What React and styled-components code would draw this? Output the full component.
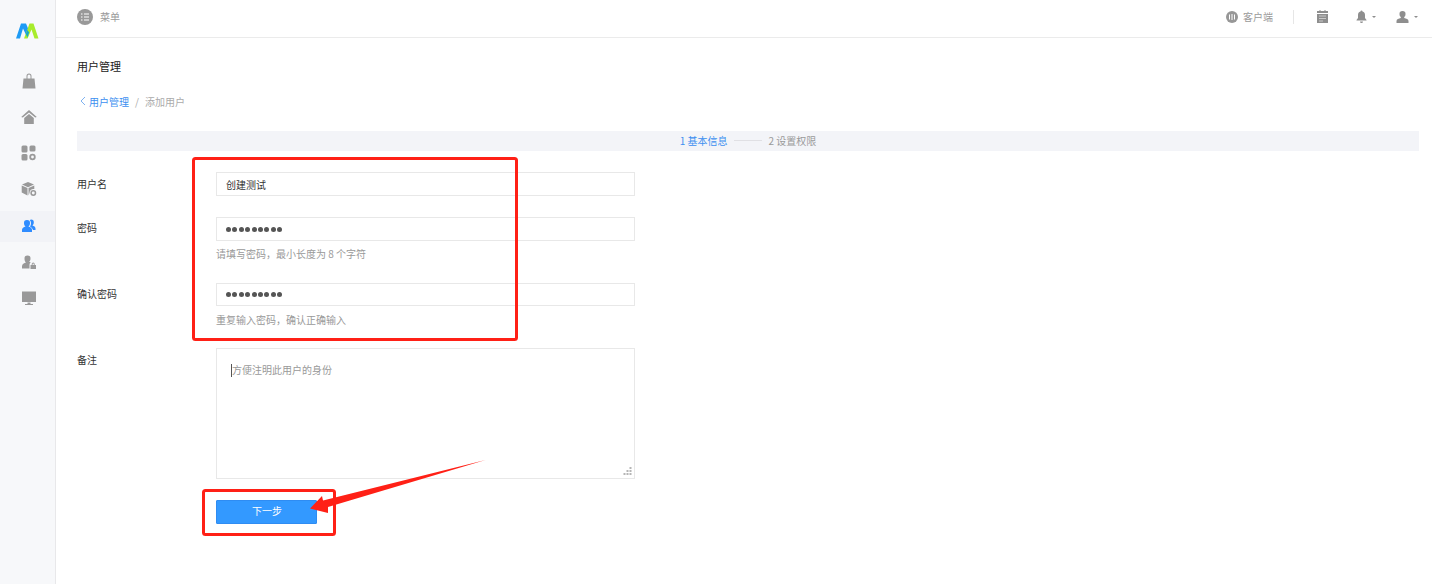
import React from "react";
import styled, { createGlobalStyle } from "styled-components";

const Global = createGlobalStyle`
  html, body { margin: 0; padding: 0; background: #fff; height: 100%; overflow: hidden; }
  * { box-sizing: border-box; }
  body { font-family: "Noto Sans CJK SC", "Liberation Sans", sans-serif; font-size: 10px; color: #333; }
`;

const Shell = styled.div`
  position: relative;
  display: flex;
  width: 1432px;
  height: 584px;
`;
const Sidebar = styled.aside`
  width: 56px;
  flex: none;
  background: #f7f8fa;
  border-right: 1px solid #e8e8ea;
  display: flex;
  flex-direction: column;
  align-items: stretch;
`;
const LogoBox = styled.div`
  height: 63px;
  padding: 22px 0 0 16px;
`;
const NavItem = styled.div`
  height: 36px;
  padding-left: 3px;
  display: flex;
  align-items: center;
  justify-content: center;
  color: #999;
`;
const ActiveNavItem = styled(NavItem)`
  height: 31px;
  margin: 4px 0 2px;
  padding-bottom: 2px;
  color: #2f8cff;
  background: #f2f3f7;
`;
const Main = styled.main`
  flex: 1;
  min-width: 0;
  display: flex;
  flex-direction: column;
`;
const Header = styled.header`
  height: 38px;
  flex: none;
  border-bottom: 1px solid #ebebeb;
  display: flex;
  align-items: center;
  justify-content: space-between;
  padding: 0 14px 4px 21px;
  color: #999;
`;
const HeaderGroup = styled.div`
  display: flex;
  align-items: center;
`;
const MenuLabel = styled.span`
  font-size: 10px;
  margin-left: 7px;
  color: #9a9a9a;
`;
const ClientLabel = styled.span`
  font-size: 10px;
  margin-left: 5px;
  color: #9a9a9a;
`;
const Divider = styled.span`
  width: 1px;
  height: 14px;
  background: #e6e6e6;
  margin: 0 23px 0 20px;
`;
const HeaderIcon = styled.span`
  display: inline-flex;
  align-items: center;
  margin-left: ${p => p.$ml || 0}px;
  color: #8e8e8e;
`;
const Caret = styled.span`
  width: 0;
  height: 0;
  margin-left: 5px;
  margin-top: 1px;
  border-left: 2px solid transparent;
  border-right: 2px solid transparent;
  border-top: 2px solid #8e8e8e;
`;
const Content = styled.div`
  padding: 20px 13px 0 21px;
`;
const Title = styled.h1`
  margin: 0;
  font-size: 11px;
  line-height: 16px;
  font-weight: 400;
  color: #222;
`;
const Crumbs = styled.nav`
  margin-top: 19px;
  height: 16px;
  display: flex;
  align-items: center;
  font-size: 10px;
  color: #aaa;
`;
const CrumbBack = styled.svg`
  margin-left: 2px;
`;
const CrumbLink = styled.span`
  color: #3c8ff0;
  margin-left: 2px;
`;
const CrumbSep = styled.span`
  margin: 0 6px;
  color: #aaa;
`;
const Steps = styled.div`
  margin-top: 22px;
  height: 20px;
  padding-bottom: 2px;
  background: #f3f4f8;
  display: flex;
  align-items: center;
  justify-content: center;
  font-size: 10px;
`;
const Step = styled.span`
  color: ${p => (p.$active ? "#3c8ff0" : "#9a9a9a")};
`;
const StepLine = styled.span`
  width: 28px;
  height: 1px;
  background: #e0e0e4;
  margin: 0 7px 0 6px;
`;
const Form = styled.form`
  margin-top: 21px;
  display: flex;
  flex-direction: column;
  gap: 21px;
`;
const Row = styled.div`
  display: flex;
  align-items: flex-start;
`;
const Label = styled.label`
  width: 139px;
  flex: none;
  font-size: 10px;
  line-height: ${p => p.$lh || 24}px;
  color: #333;
`;
const Field = styled.div`
  width: 419px;
  display: flex;
  flex-direction: column;
`;
const Input = styled.div`
  height: ${p => p.$h || 24}px;
  border: 1px solid #e8e8e8;
  padding-left: 9px;
  display: flex;
  align-items: center;
  font-size: 10px;
  color: #333;
`;
const Dots = styled.span`
  display: flex;
  gap: 1.4px;
`;
const Dot = styled.i`
  width: 5px;
  height: 5px;
  border-radius: 50%;
  background: #555;
`;
const Help = styled.div`
  margin-top: ${p => p.$mt}px;
  height: ${p => p.$h}px;
  line-height: 14px;
  font-size: 10px;
  color: #999;
`;
const Area = styled.div`
  position: relative;
  height: 131px;
  border: 1px solid #e8e8e8;
  padding: 13px 0 0 14px;
  font-size: 10px;
  line-height: 16px;
  color: #999;
  display: flex;
  align-items: flex-start;
`;
const Cursor = styled.span`
  width: 1px;
  height: 13px;
  margin-top: 2px;
  background: #555;
`;
const Grip = styled.svg`
  position: absolute;
  right: 2px;
  bottom: 2px;
`;
const NextButton = styled.button`
  width: 101px;
  height: 24px;
  margin-left: 139px;
  border: 1px solid #2f8cf2;
  border-radius: 1px;
  background: #3399ff;
  color: #fff;
  font: inherit;
  font-size: 10px;
  padding: 0 0 4px 1px;
`;
const Annotation = styled.svg`
  position: absolute;
  left: 0;
  top: 0;
  pointer-events: none;
`;

const Logo = () => (
  <svg width="23" height="18" viewBox="0 0 23 18">
    <path d="M0 16.500 L5 1.500 L10 1.500 L13.500 10 L11.500 16 L7 6.500 L4 16.500 Z" fill="#1e9bf5" />
    <path d="M8 16.500 L13.500 1.500 L17.500 1.500 L22.500 16.500 L18.500 16.500 L15.500 7.500 L11.500 16.500 Z" fill="#a8ec2c" />
    <path d="M9.800 12 L11.300 8 L13.200 10.500 L11.300 15.500 Z" fill="#1aa6c8" />
  </svg>
);
const Ico = ({ d, extra }) => (
  <svg width="16" height="16" viewBox="0 0 16 16" fill="currentColor">
    <path d={d} fillRule="evenodd" />
    {extra}
  </svg>
);
const navItems = [
  { d: "M2.500 5.500h11L14.500 15.500h-13z M5.500 5.500V3a2.500 2.500 0 0 1 5 0V5.500H9.500V3a1.500 1.500 0 0 0-3 0V5.500z" },
  { d: "M8 1 L15.800 8 L14.200 8.600 L8 3.400 L1.800 8.600 L.2 8z M3.200 9 L8 5 L12.800 9 V15 H3.200z" },
  { d: "M.5 2a1.500 1.500 0 0 1 1.500-1.500h3A1.500 1.500 0 0 1 6.500 2v4A1.500 1.500 0 0 1 5 7.500H2A1.500 1.500 0 0 1 .5 6z M8.500 2A1.500 1.500 0 0 1 10 .5h3A1.500 1.500 0 0 1 14.500 2v3A1.500 1.500 0 0 1 13 6.500h-3A1.500 1.500 0 0 1 8.500 5z M.5 10.500A1.500 1.500 0 0 1 2 9h3a1.500 1.500 0 0 1 1.500 1.500V14A1.500 1.500 0 0 1 5 15.500H2A1.500 1.500 0 0 1 .5 14z",
    extra: <circle cx="11.500" cy="12" r="2.300" fill="none" stroke="currentColor" strokeWidth="1.800" /> },
  { d: "M7 1 L13 3.600 L7 6.200 L1 3.600z M.7 4.500 L6.500 7 V14.500 L.7 11.500z M7.500 7 L13.300 4.500 V8 A4 4 0 0 0 8.500 12 L7.500 14.500z",
    extra: <circle cx="12.300" cy="12" r="2.200" fill="none" stroke="currentColor" strokeWidth="1.500" /> },
  { d: "M6 2a3 3 0 0 1 3 3.200c0 1.400-.7 2.600-1.600 3.200 2 .5 3.600 1.600 3.600 3.300V14H1v-2.300c0-1.700 1.600-2.800 3.600-3.300C3.700 7.800 3 6.600 3 5.200A3 3 0 0 1 6 2z M10 1.500a2.800 2.800 0 0 1 2.800 3c0 1.300-.6 2.400-1.400 3 1.800.4 3.100 1.400 3.100 3V12H12c-.4-1.600-1.600-2.800-3-3.600 .7-.9 1-2 1-3.200 0-1.200-.4-2.200-1.100-3 .3-.4.7-.7 1.100-.7z", active: true },
  { d: "M6.500 1.500a3 3 0 0 1 3 3.200c0 1.300-.6 2.400-1.400 3 .6.100 1.100.3 1.600.6A3 3 0 0 0 8.500 11v3.500H1v-2.300c0-2 2.200-3.300 4-3.700C4.100 7.800 3.500 6.300 3.500 4.700A3 3 0 0 1 6.500 1.500z M9.500 11h5.500v4H9.500z M10.700 11v-1a1.500 1.500 0 0 1 3 0v1h-.9v-1a.6.6 0 0 0-1.200 0v1z" },
  { d: "M1 1.500h14V12H1z M6.500 12.500h3V14H12v1H4v-1h2.500z" },
];

const Masked = () => (
  <Dots>
    {Array.from({ length: 9 }, (_, i) => <Dot key={i} />)}
  </Dots>
);

export default function App() {
  return (
    <Shell>
      <Global />
      <Sidebar>
        <LogoBox><Logo /></LogoBox>
        {navItems.map((n, i) => {
          const Item = n.active ? ActiveNavItem : NavItem;
          return (
            <Item key={i}>
              <Ico d={n.d} extra={n.extra} />
            </Item>
          );
        })}
      </Sidebar>
      <Main>
        <Header>
          <HeaderGroup>
            <svg width="16" height="16" viewBox="0 0 16 16">
              <circle cx="8" cy="8" r="8" fill="#999" />
              <path d="M4 5h1.500M7 5h5M4 8h1.500M7 8h5M4 11h1.500M7 11h5" stroke="#fff" strokeWidth="1.200" />
            </svg>
            <MenuLabel>菜单</MenuLabel>
          </HeaderGroup>
          <HeaderGroup>
            <svg width="12" height="12" viewBox="0 0 12 12">
              <circle cx="6" cy="6" r="6" fill="#979797" />
              <path d="M3.500 3.500v5M6 3v6M8.500 3.500v5" stroke="#fff" strokeWidth="1" />
            </svg>
            <ClientLabel>客户端</ClientLabel>
            <Divider />
            <HeaderIcon>
              <svg width="11" height="13" viewBox="0 0 11 13" fill="#8e8e8e">
                <path d="M0 1h11v12H0z" />
                <path d="M0 3.500h11" stroke="#fff" strokeWidth="1" />
                <path d="M2 6h7M2 8.500h7M2 11h4" stroke="#c9c9c9" strokeWidth="1" />
                <path d="M2.500 0h1v2h-1zM7.500 0h1v2h-1z" />
              </svg>
            </HeaderIcon>
            <HeaderIcon $ml={28}>
              <svg width="11" height="13" viewBox="0 0 11 13" fill="#8e8e8e">
                <path d="M5.500 0.500a1 1 0 0 1 1 1c1.800.4 2.500 1.900 2.500 3.500v3l1.500 2v.5H.5V10L2 8V5c0-1.600.7-3.100 2.500-3.500a1 1 0 0 1 1-1z M4 11.500h3a1.500 1.500 0 0 1-3 0z" />
              </svg>
            </HeaderIcon>
            <Caret />
            <HeaderIcon $ml={20}>
              <svg width="13" height="12" viewBox="0 0 13 12" fill="#8e8e8e">
                <path d="M6.500 0a3 3 0 0 1 3 3.200c0 1.200-.5 2.300-1.300 2.900v.9c2 .5 4.300 1.200 4.300 3V12H.5v-2c0-1.800 2.300-2.500 4.300-3v-.9C4 5.500 3.500 4.400 3.500 3.200A3 3 0 0 1 6.500 0z" />
              </svg>
            </HeaderIcon>
            <Caret />
          </HeaderGroup>
        </Header>
        <Content>
          <Title>用户管理</Title>
          <Crumbs>
            <CrumbBack width="8" height="10" viewBox="0 0 8 10" fill="none" stroke="#7fb2f0" strokeWidth="1">
              <path d="M6 1 L2 5 L6 9" />
            </CrumbBack>
            <CrumbLink>用户管理</CrumbLink>
            <CrumbSep>/</CrumbSep>
            添加用户
          </Crumbs>
          <Steps>
            <Step $active>1 基本信息</Step>
            <StepLine />
            <Step>2 设置权限</Step>
          </Steps>
          <Form>
            <Row>
              <Label>用户名</Label>
              <Field><Input>创建测试</Input></Field>
            </Row>
            <Row>
              <Label $lh={22}>密码</Label>
              <Field>
                <Input><Masked /></Input>
                <Help $mt={6} $h={15}>请填写密码，最小长度为 8 个字符</Help>
              </Field>
            </Row>
            <Row>
              <Label $lh={22}>确认密码</Label>
              <Field>
                <Input $h={23}><Masked /></Input>
                <Help $mt={7} $h={14}>重复输入密码，确认正确输入</Help>
              </Field>
            </Row>
            <Row>
              <Label>备注</Label>
              <Field>
                <Area>
                  <Cursor />
                  方便注明此用户的身份
                  <Grip width="9" height="9" viewBox="0 0 9 9" fill="#b5b5b5">
                    <path d="M6.500 0h2v2h-2zM3.500 3h2v2h-2zM6.500 3h2v2h-2zM.5 6h2v2h-2zM3.500 6h2v2h-2zM6.500 6h2v2h-2z" />
                  </Grip>
                </Area>
              </Field>
            </Row>
            <NextButton type="button">下一步</NextButton>
          </Form>
        </Content>
      </Main>
      <Annotation width="1432" height="584" viewBox="0 0 1432 584">
        <rect x="193.500" y="158.500" width="323" height="181" rx="2" fill="none" stroke="#ff2016" strokeWidth="3" />
        <rect x="203.500" y="490.500" width="131" height="44" rx="2" fill="none" stroke="#ff2016" strokeWidth="3" />
        <path d="M485.500 460 L328 507 L328 513 L310 508.500 L322 496 L323 500.500 Z" fill="#ff2016" />
      </Annotation>
    </Shell>
  );
}
